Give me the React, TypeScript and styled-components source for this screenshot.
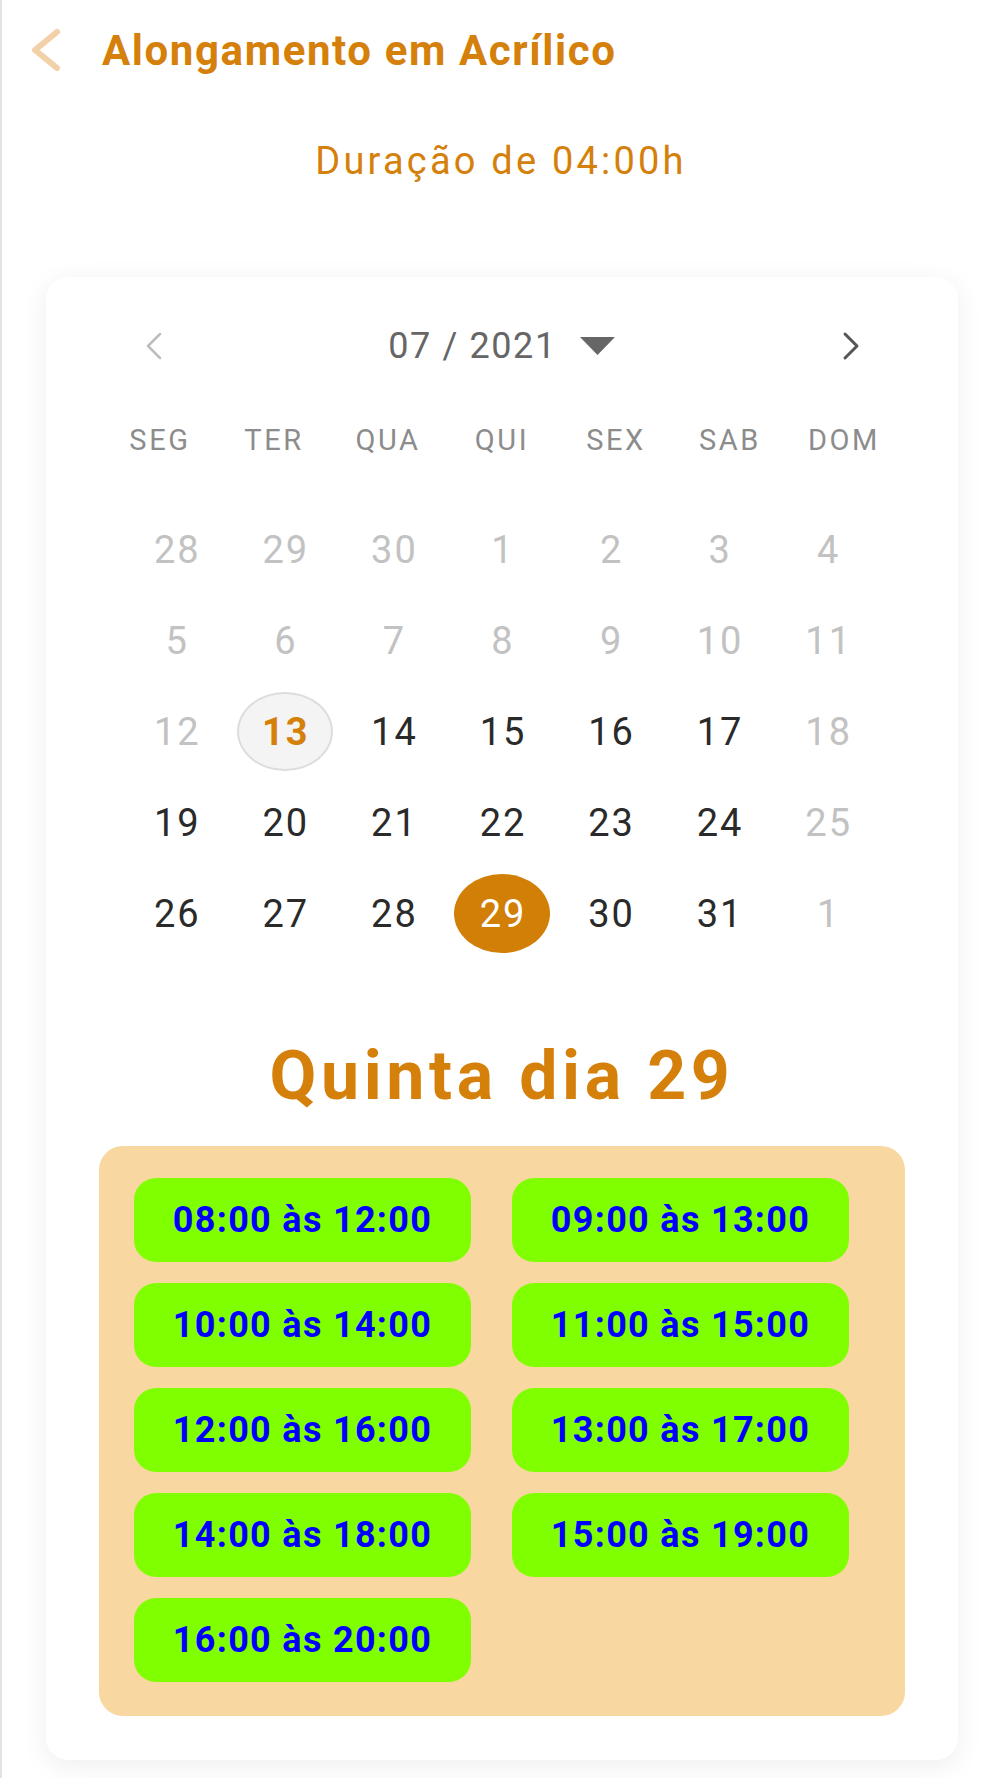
import styled, { createGlobalStyle } from 'styled-components';

type DayState = 'muted' | 'normal' | 'today' | 'selected';

interface DayType {
  n: number;
  s: DayState;
}

const ORANGE = '#d4800a';

const WEEKDAYS = ['SEG', 'TER', 'QUA', 'QUI', 'SEX', 'SAB', 'DOM'];

const SLOTS = [
  '08:00 às 12:00',
  '09:00 às 13:00',
  '10:00 às 14:00',
  '11:00 às 15:00',
  '12:00 às 16:00',
  '13:00 às 17:00',
  '14:00 às 18:00',
  '15:00 às 19:00',
  '16:00 às 20:00',
];

// semanas de julho/2021, segunda a domingo
const buildWeeks = (): DayType[][] => {
  const nums = [
    [28, 29, 30, 1, 2, 3, 4],
    [5, 6, 7, 8, 9, 10, 11],
    [12, 13, 14, 15, 16, 17, 18],
    [19, 20, 21, 22, 23, 24, 25],
    [26, 27, 28, 29, 30, 31, 1],
  ];
  return nums.map((week, w) =>
    week.map((n, i) => {
      let s: DayState = 'normal';
      if (w < 2 || i === 6 || (w === 2 && i === 0)) s = 'muted';
      if (w === 2 && n === 13) s = 'today';
      if (w === 4 && n === 29) s = 'selected';
      return { n, s };
    }),
  );
};

const GlobalStyle = createGlobalStyle`
  html, body {
    margin: 0;
    padding: 0;
    background: #ffffff;
  }
  body {
    font-family: Roboto, 'Liberation Sans', Arial, sans-serif;
  }
  * {
    box-sizing: border-box;
  }
`;

const Page = styled.div`
  min-height: 1778px;
  border-left: 2px solid #e2e2e2;
  display: flex;
  flex-direction: column;
`;

const Header = styled.header`
  height: 100px;
  display: flex;
  align-items: center;
  padding-left: 26px;
  gap: 40px;
`;

const BackButton = styled.button`
  border: none;
  background: none;
  padding: 0;
  display: flex;
  cursor: pointer;
`;

const Title = styled.h1`
  margin: 0;
  font-size: 42px;
  font-weight: 700;
  letter-spacing: 1.6px;
  color: ${ORANGE};
`;

const Duration = styled.p`
  margin: 41px 0 0;
  line-height: 40px;
  text-align: center;
  font-size: 38px;
  letter-spacing: 3.2px;
  color: ${ORANGE};
`;

const Card = styled.section`
  margin: 96px 42px 0 44px;
  background: #ffffff;
  border-radius: 22px;
  box-shadow: 0 6px 28px rgba(0, 0, 0, 0.07);
  padding: 44px 0 44px;
`;

const MonthBar = styled.div`
  height: 50px;
  display: flex;
  align-items: center;
  justify-content: space-between;
  padding: 0 96px 0 98px;
`;

const NavButton = styled.button`
  border: none;
  background: none;
  padding: 0;
  display: flex;
  cursor: pointer;
`;

const MonthLabel = styled.div`
  display: flex;
  align-items: center;
  gap: 22px;
  font-size: 36px;
  letter-spacing: 1.6px;
  color: #666666;
`;

const WeekHeader = styled.div`
  margin-top: 49px;
  height: 40px;
  display: grid;
  grid-template-columns: repeat(7, 1fr);
  padding: 0 57px;
  align-items: center;
`;

const WeekdayLabel = styled.span`
  text-align: center;
  font-size: 29px;
  letter-spacing: 2.6px;
  color: #8c8c8c;
`;

const DaysGrid = styled.div`
  margin-top: 44px;
  display: grid;
  grid-template-columns: repeat(7, 1fr);
  grid-auto-rows: 91px;
  padding: 0 76px;
`;

const DayCell = styled.div`
  display: flex;
  align-items: center;
  justify-content: center;
`;

const DayBubble = styled.span<{ $state: DayState }>`
  width: 96px;
  height: 79px;
  border-radius: 50%;
  display: flex;
  align-items: center;
  justify-content: center;
  font-size: 38px;
  letter-spacing: 2px;
  padding-left: 2px;
  font-weight: ${p => (p.$state === 'today' ? 700 : 400)};
  color: ${p =>
    p.$state === 'muted'
      ? '#c2c2c2'
      : p.$state === 'today'
        ? ORANGE
        : p.$state === 'selected'
          ? '#ffffff'
          : '#2a2a2a'};
  background: ${p =>
    p.$state === 'today'
      ? '#f4f4f4'
      : p.$state === 'selected'
        ? '#d17f06'
        : 'transparent'};
  border: 2px solid
    ${p => (p.$state === 'today' ? '#dddddd' : 'transparent')};
`;

const DayHeading = styled.h2`
  margin: 77px 0 0;
  line-height: 80px;
  text-align: center;
  font-size: 68px;
  font-weight: 700;
  letter-spacing: 4.6px;
  color: ${ORANGE};
`;

const SlotsPanel = styled.div`
  margin: 30px 53px 0;
  background: #f8d8a0;
  border-radius: 24px;
  padding: 32px 35px 34px;
  display: grid;
  grid-template-columns: repeat(2, 337px);
  grid-auto-rows: 84px;
  column-gap: 41px;
  row-gap: 21px;
`;

const SlotButton = styled.button`
  border: none;
  border-radius: 22px;
  background: #80ff00;
  color: #0000ff;
  font-family: Roboto, 'Liberation Sans', Arial, sans-serif;
  font-size: 36px;
  font-weight: 700;
  letter-spacing: 1.3px;
  cursor: pointer;
`;

export default function App() {
  const weeks = buildWeeks();
  return (
    <>
      <GlobalStyle />
      <Page>
        <Header>
          <BackButton aria-label='Voltar'>
            <svg width={34} height={44} viewBox='0 0 34 44'>
              <path
                d='M29 4 L7 22 L29 40'
                fill='none'
                stroke='#f2d0a8'
                strokeWidth={6}
                strokeLinecap='round'
                strokeLinejoin='round'
              />
            </svg>
          </BackButton>
          <Title>Alongamento em Acrílico</Title>
        </Header>
        <Duration>Duração de 04:00h</Duration>
        <Card>
          <MonthBar>
            <NavButton aria-label='Mês anterior'>
              <svg width={20} height={30} viewBox='0 0 20 30'>
                <path
                  d='M16 3 L4 15 L16 27'
                  fill='none'
                  stroke='#bdbdbd'
                  strokeWidth={2.5}
                  strokeLinecap='round'
                  strokeLinejoin='round'
                />
              </svg>
            </NavButton>
            <MonthLabel>
              07 / 2021
              <svg width={37} height={20} viewBox='0 0 37 20'>
                <path d='M1 1 L36 1 L18.5 19 Z' fill='#666666' />
              </svg>
            </MonthLabel>
            <NavButton aria-label='Próximo mês'>
              <svg width={22} height={30} viewBox='0 0 22 30'>
                <path
                  d='M5 3 L17 15 L5 27'
                  fill='none'
                  stroke='#555555'
                  strokeWidth={3}
                  strokeLinecap='round'
                  strokeLinejoin='round'
                />
              </svg>
            </NavButton>
          </MonthBar>
          <WeekHeader>
            {WEEKDAYS.map(d => (
              <WeekdayLabel key={d}>{d}</WeekdayLabel>
            ))}
          </WeekHeader>
          <DaysGrid>
            {weeks.map((week, w) =>
              week.map((d, i) => (
                <DayCell key={`${w}-${i}`}>
                  <DayBubble $state={d.s}>{d.n}</DayBubble>
                </DayCell>
              )),
            )}
          </DaysGrid>
          <DayHeading>Quinta dia 29</DayHeading>
          <SlotsPanel>
            {SLOTS.map(s => (
              <SlotButton key={s}>{s}</SlotButton>
            ))}
          </SlotsPanel>
        </Card>
      </Page>
    </>
  );
}
